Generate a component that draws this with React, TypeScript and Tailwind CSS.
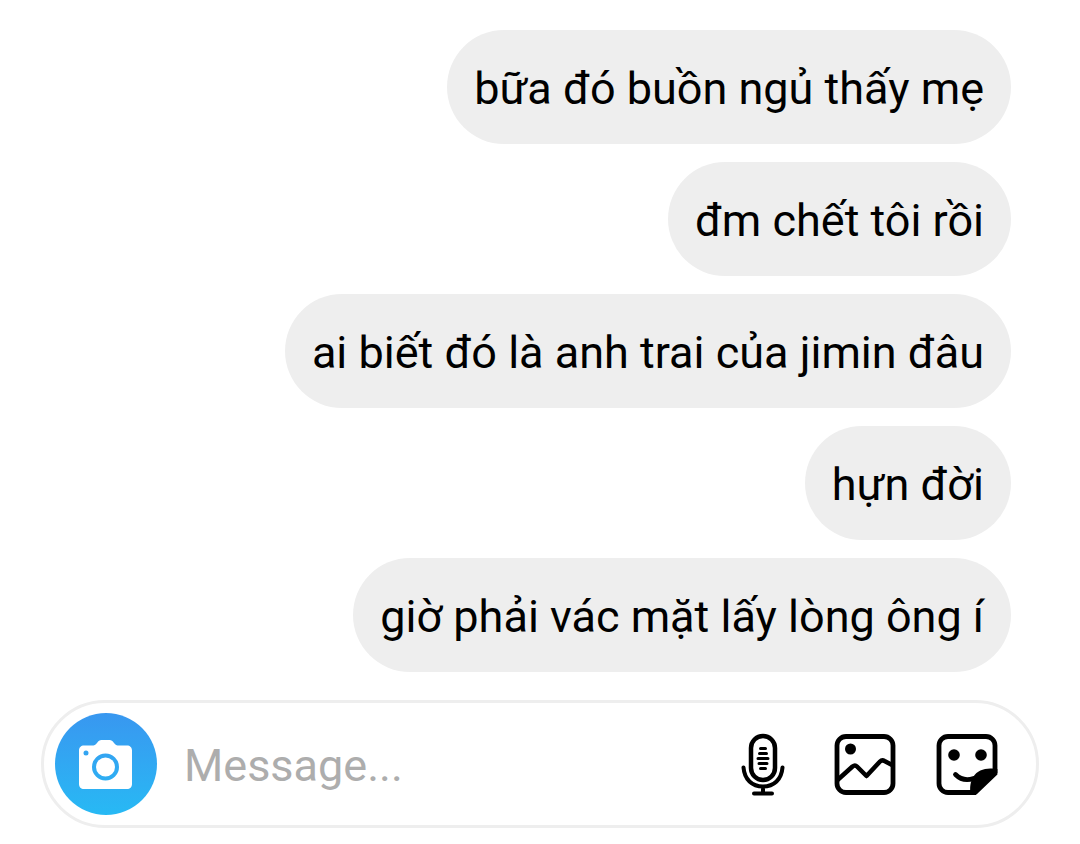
import React, { useState } from 'react';

const messages = [
  'bữa đó buồn ngủ thấy mẹ',
  'đm chết tôi rồi',
  'ai biết đó là anh trai của jimin đâu',
  'hựn đời',
  'giờ phải vác mặt lấy lòng ông í',
];

function CameraIcon() {
  return (
    <svg className="w-14 h-14" viewBox="0 0 56 56" aria-hidden="true">
      <path
        fill="#fff"
        fillRule="evenodd"
        d="M6 9.500h7.500c3 0 4.200-.8 5.700-2.800C20.500 5 21.500 4 23.500 4h8c2 0 3 1 4.300 2.700 1.500 2 2.700 2.800 5.700 2.800H49c3 0 5 2 5 5v33.500c0 3-2 5-5 5H6c-3 0-5-2-5-5V14.500c0-3 2-5 5-5zM27.500 17.500a13.500 13.500 0 1 0 0 27 13.500 13.500 0 0 0 0-27zM8 14.500a2.500 2.500 0 1 0 0 5 2.500 2.500 0 0 0 0-5z"
      />
      <circle cx="27.5" cy="31" r="9.5" fill="#fff" />
    </svg>
  );
}

function MicIcon() {
  return (
    <svg className="w-16 h-16" viewBox="0 0 64 64" fill="none" stroke="#000" strokeLinecap="round" aria-hidden="true">
      <rect x="20" y="4" width="24" height="44" rx="12" strokeWidth="4.5" />
      <path d="M12.500 35.500c1 12 8.500 19 19.500 19s18.500-7 19.500-19M32 55v6M23 61.500h18" strokeWidth="4" />
      <path d="M29.500 16.500h5M28.500 21.500h7M27 26.500h10M28 31.500h8M29.500 36.500h5" strokeWidth="3" />
    </svg>
  );
}

function GalleryIcon() {
  return (
    <svg className="w-16 h-16" viewBox="0 0 64 64" fill="none" stroke="#000" aria-hidden="true">
      <rect x="4" y="4.500" width="56" height="56" rx="9" strokeWidth="4.8" />
      <circle cx="17.5" cy="17" r="5.5" fill="#000" stroke="none" />
      <path d="M4 48.500l15.500-14q2.500-2 4.500 0L33.500 44 47 29.500q2-2 4.500-.5L60 33.500" strokeWidth="4.5" strokeLinejoin="round" />
    </svg>
  );
}

function StickerIcon() {
  return (
    <svg className="w-16 h-16" viewBox="0 0 64 64" fill="none" stroke="#000" aria-hidden="true">
      <path d="M60 41V13.500a9 9 0 0 0-9-9H13a9 9 0 0 0-9 9v38a9 9 0 0 0 9 9h28" strokeWidth="4.8" />
      <circle cx="19" cy="23" r="5.8" fill="#000" stroke="none" />
      <circle cx="46" cy="23" r="5.8" fill="#000" stroke="none" />
      <path d="M20.500 42.500c5 5 10.500 6.500 18 4" strokeWidth="4.8" strokeLinecap="round" />
      <path d="M62.400 37v5.500L41.500 62.500l-6 .4c-.8-8-.3-13.500 3-18.500C42 39 49 36 57 36.500z" fill="#000" stroke="none" />
    </svg>
  );
}

export default function App() {
  const [draft, setDraft] = useState('');

  return (
    <main className="bg-white pt-[30px] pb-4 font-[Roboto,sans-serif] text-black">
      <ul className="flex flex-col items-end gap-[18px] pl-10 pr-[69px]">
        {messages.map((message) => (
          <li key={message} className="rounded-[57px] bg-[#eeeeee] px-[27px] pt-[30px] pb-[26px] text-[45px] leading-[58px]">
            {message}
          </li>
        ))}
      </ul>

      <form
        className="mx-[41px] mt-7 flex items-center rounded-full border-[3px] border-[#eeeeee] py-[10px] pl-[11px] pr-[37px]"
        onSubmit={(e) => {
          e.preventDefault();
          setDraft('');
        }}
      >
        <button
          type="button"
          aria-label="Camera"
          className="flex h-[102px] w-[102px] shrink-0 items-center justify-center rounded-full bg-linear-to-b from-[#3897f0] to-[#27b9f4]"
        >
          <CameraIcon />
        </button>
        <input
          type="text"
          aria-label="Message"
          placeholder="Message..."
          value={draft}
          onChange={(e) => setDraft(e.target.value)}
          className="ml-[27px] min-w-0 flex-1 bg-transparent pt-1 text-[45px] leading-[58px] outline-none placeholder:text-[#adadad]"
        />
        <div className="flex shrink-0 gap-[38px]">
          <button type="button" aria-label="Record voice">
            <MicIcon />
          </button>
          <button type="button" aria-label="Choose photo">
            <GalleryIcon />
          </button>
          <button type="button" aria-label="Stickers">
            <StickerIcon />
          </button>
        </div>
      </form>
    </main>
  );
}
